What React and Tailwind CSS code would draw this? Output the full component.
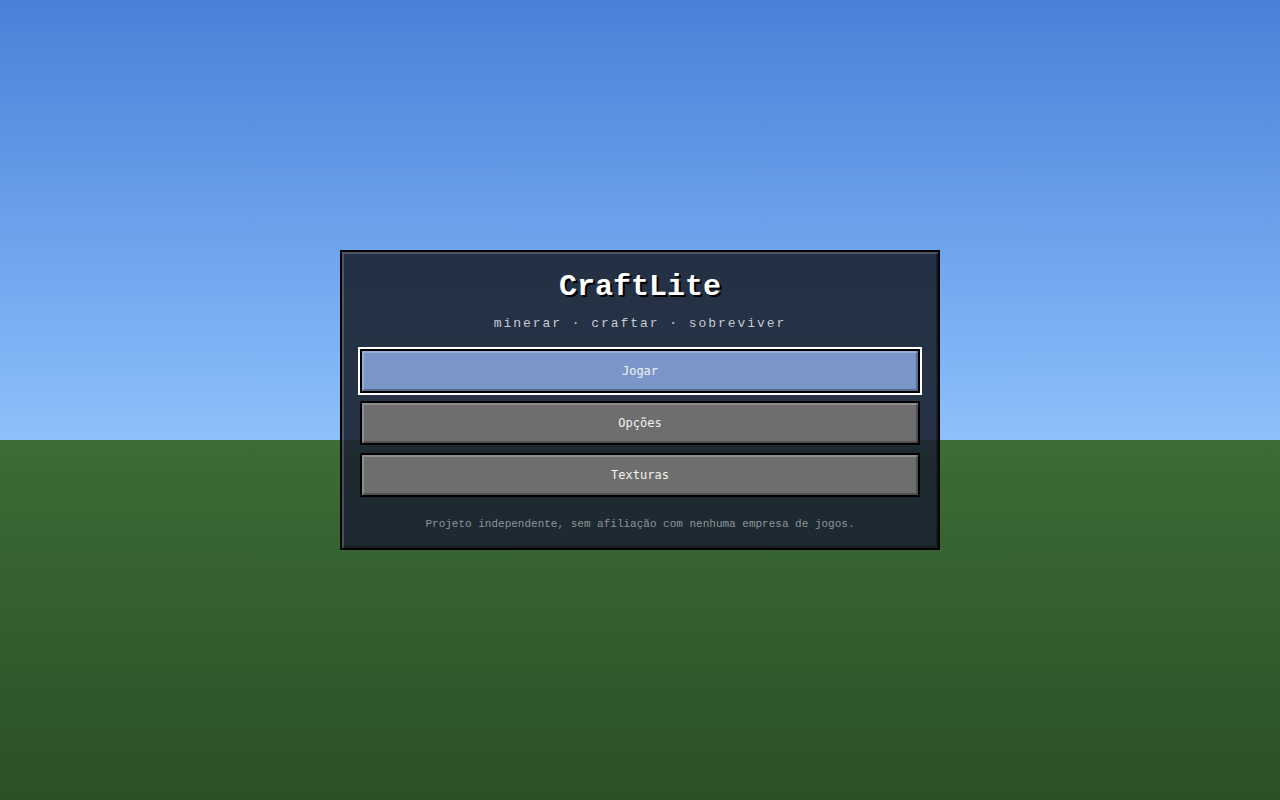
import React, { useState } from 'react';

const items = ['Jogar', 'Opções', 'Texturas'];

const MenuButton = ({ label, active, onClick }) => (
  <button
    type="button"
    onClick={onClick}
    className={`h-11 w-full border-2 border-black text-[12px] text-[#f2f2f2] shadow-[inset_2px_2px_0_rgba(255,255,255,0.22),inset_-2px_-2px_0_rgba(0,0,0,0.28)] ${
      active ? 'bg-[#7b96c8] outline-2 outline-white' : 'bg-[#6e6e6e] hover:bg-[#7a7a7a]'
    }`}
    style={{ fontFamily: '"DejaVu Sans Mono", monospace' }}
  >
    {label}
  </button>
);

const App = () => {
  const [selected, setSelected] = useState(0);

  return (
    <div className="relative flex h-[800px] w-full flex-col overflow-hidden">
      <div className="h-[440px] w-full bg-gradient-to-b from-[#4a80d8] to-[#8ec0fc]" />
      <div className="h-[360px] w-full bg-gradient-to-b from-[#3b6d35] to-[#2c4f28]" />

      {/* menu panel over the scene */}
      <div className="absolute inset-0 flex items-center justify-center">
        <div
          className="flex w-[600px] flex-col items-center border-2 border-black bg-[rgba(28,35,49,0.9)] px-[18px] pt-[17px] pb-4 shadow-[inset_2px_2px_0_rgba(255,255,255,0.18),inset_-2px_-2px_0_rgba(0,0,0,0.35)]"
          style={{ fontFamily: '"Liberation Mono", "Courier New", monospace' }}
        >
          <h1 className="text-[30px] leading-9 font-bold text-white [text-shadow:2px_2px_0_#000]">CraftLite</h1>
          <p className="mt-[10px] text-[13px] leading-[18px] tracking-[0.15em] text-[#c5cad3]">
            minerar · craftar · sobreviver
          </p>
          <div className="mt-[16px] flex w-full flex-col gap-2">
            {items.map((label, i) => (
              <MenuButton key={label} label={label} active={selected === i} onClick={() => setSelected(i)} />
            ))}
          </div>
          <p className="mt-[19px] text-[11px] leading-4 text-[#8d949e]">
            Projeto independente, sem afiliação com nenhuma empresa de jogos.
          </p>
        </div>
      </div>
    </div>
  );
};

export default App;
